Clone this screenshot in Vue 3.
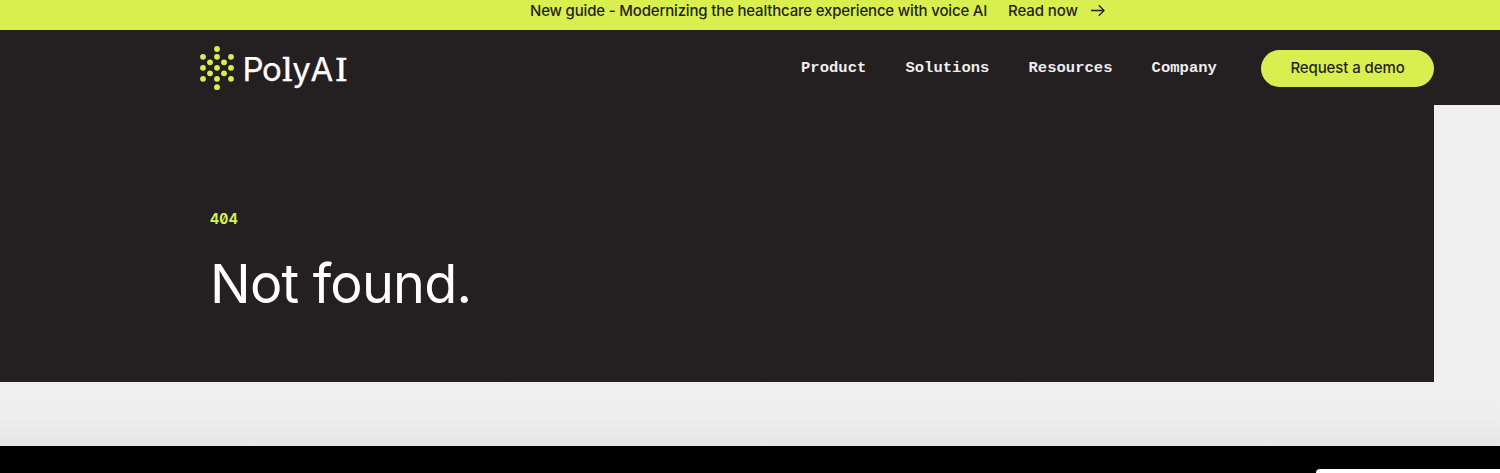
<!-- src/App.vue -->
<script setup>
const links = ['Product', 'Solutions', 'Resources', 'Company'];

// Dot centres of the logo mark
const dots = [
  [17, 3], [3, 10.8], [17, 10.8], [31, 10.8],
  [10, 16.3], [24, 16.3],
  [3, 21.8], [17, 21.8], [31, 21.8],
  [10, 27.3], [24, 27.3],
  [3, 32.8], [17, 32.8], [31, 32.8], [17, 41.2],
];
</script>

<template>
  <div class="page">
    <a class="banner">
      <span class="banner-text">New guide - Modernizing the healthcare experience with voice AI</span>
      <span class="banner-cta">Read now</span>
      <svg class="arrow" width="16" height="14" viewBox="0 0 16 14">
        <path d="M1 6.5H14M8.8 1.3L14 6.5L8.8 11.7" />
      </svg>
    </a>

    <header class="header">
      <svg class="logo" width="150" height="46" viewBox="0 0 150 46">
        <circle v-for="([x, y], i) in dots" :key="i" :cx="x" :cy="y" r="2.9" />
        <text y="34.6">
          <tspan x="42.6">P</tspan><tspan x="62">o</tspan><tspan x="82.2" class="slab">l</tspan><tspan x="92.2">y</tspan><tspan x="110.5">A</tspan><tspan x="135" class="slab">I</tspan>
        </text>
      </svg>
      <nav class="nav">
        <a v-for="link in links" :key="link">{{ link }}</a>
      </nav>
      <a class="demo"><span>Request a demo</span></a>
    </header>

    <main class="hero">
      <p class="code">404</p>
      <h1>Not found.</h1>
    </main>

    <div class="spacer"></div>
    <footer class="footer">
      <div class="panel"></div>
    </footer>
  </div>
</template>

<style>
body {
  margin: 0;
  overflow: hidden;
}
</style>

<style scoped>
.page {
  height: 473px;
  overflow: hidden;
  background: #f0f0f0;
  font-family: Inter, sans-serif;
  color: #241f21;
}
.banner {
  display: flex;
  align-items: center;
  box-sizing: border-box;
  height: 30px;
  padding: 0 0 9px 530px;
  background: #d9ef50;
  font-size: 15px;
  font-weight: 500;
  line-height: 20px;
  white-space: nowrap;
}
.banner-text {
  width: 478px;
  letter-spacing: -0.18px;
}
.banner-cta {
  width: 82px;
  letter-spacing: -0.1px;
}
.arrow path {
  fill: none;
  stroke: #241f21;
  stroke-width: 1.3;
}
.header {
  display: flex;
  align-items: flex-start;
  box-sizing: border-box;
  height: 75px;
  padding: 16px 66px 0 200px;
  background: #241f21;
}
.logo {
  flex: none;
}
.logo circle {
  fill: #d9ef50;
}
.logo text {
  fill: #fff;
  font-size: 33px;
  font-weight: 400;
  stroke: #fff;
  stroke-width: 0.25;
}
.logo .slab {
  font-family: "DejaVu Serif", serif;
  font-size: 32px;
  stroke-width: 0.7;
}
.nav {
  display: flex;
  gap: 39px;
  margin-left: 451px;
  color: #eee;
  font: bold 15.5px/45px "Liberation Mono", monospace;
  letter-spacing: 0.04px;
}
.demo {
  flex: none;
  width: 173px;
  height: 37px;
  margin: 4px 0 0 auto;
  border-radius: 19px;
  background: #d9ef50;
  font-size: 15px;
  font-weight: 500;
  line-height: 36px;
  letter-spacing: -0.1px;
  text-align: center;
}
.hero {
  box-sizing: border-box;
  width: 1434px;
  height: 277px;
  padding: 104px 0 0 210px;
  background: #241f21;
}
.code {
  margin: 0;
  color: #d9ef50;
  font-size: 14px;
  font-weight: 700;
  font-feature-settings: "zero", "tnum";
  line-height: 20px;
  letter-spacing: 0.3px;
}
h1 {
  margin: 20px 0 0;
  color: #fff;
  font-size: 54px;
  font-weight: 400;
  line-height: 70px;
  letter-spacing: -0.8px;
}
.spacer {
  height: 64px;
  background: linear-gradient(#f0f0f0, #eee 55%, #e5e5e5);
}
.footer {
  height: 27px;
  padding-top: 23px;
  box-sizing: border-box;
  background: #000;
}
.panel {
  height: 10px;
  margin-left: 1316px;
  border-top-left-radius: 4px;
  background: #fff;
}
</style>
